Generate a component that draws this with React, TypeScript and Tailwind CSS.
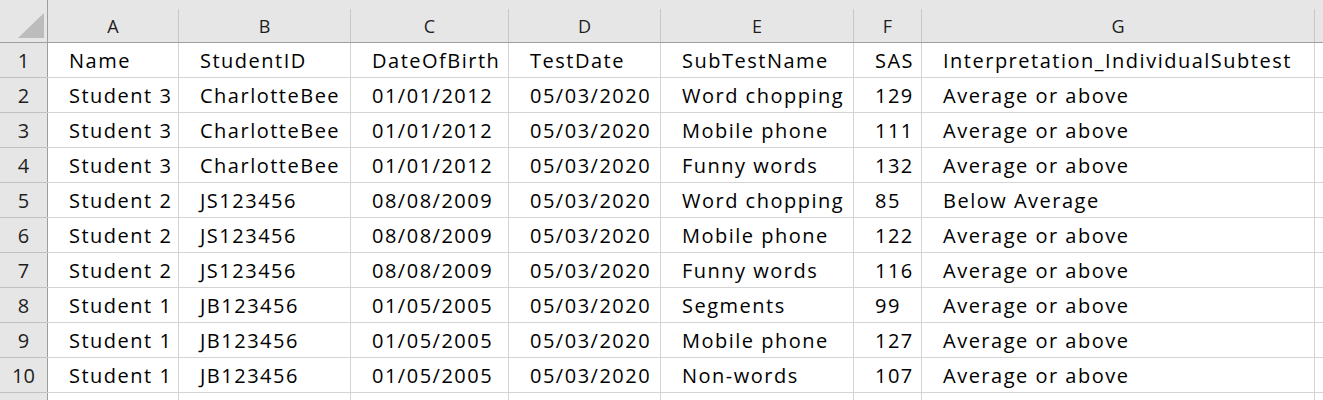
import React from "react";

const cols = [
  { key: "A", w: "w-[131px]" },
  { key: "B", w: "w-[172px]" },
  { key: "C", w: "w-[158px]" },
  { key: "D", w: "w-[152px]" },
  { key: "E", w: "w-[193px]" },
  { key: "F", w: "w-[68px]" },
  { key: "G", w: "w-[393px]" },
];

const rows: string[][] = [
  ["Name", "StudentID", "DateOfBirth", "TestDate", "SubTestName", "SAS", "Interpretation_IndividualSubtest"],
  ["Student 3", "CharlotteBee", "01/01/2012", "05/03/2020", "Word chopping", "129", "Average or above"],
  ["Student 3", "CharlotteBee", "01/01/2012", "05/03/2020", "Mobile phone", "111", "Average or above"],
  ["Student 3", "CharlotteBee", "01/01/2012", "05/03/2020", "Funny words", "132", "Average or above"],
  ["Student 2", "JS123456", "08/08/2009", "05/03/2020", "Word chopping", "85", "Below Average"],
  ["Student 2", "JS123456", "08/08/2009", "05/03/2020", "Mobile phone", "122", "Average or above"],
  ["Student 2", "JS123456", "08/08/2009", "05/03/2020", "Funny words", "116", "Average or above"],
  ["Student 1", "JB123456", "01/05/2005", "05/03/2020", "Segments", "99", "Average or above"],
  ["Student 1", "JB123456", "01/05/2005", "05/03/2020", "Mobile phone", "127", "Average or above"],
  ["Student 1", "JB123456", "01/05/2005", "05/03/2020", "Non-words", "107", "Average or above"],
];

export default function App() {
  return (
    <div
      className="w-[1323px] h-[400px] overflow-hidden bg-white text-black"
      style={{ fontFamily: "'Open Sans', 'Noto Sans', sans-serif" }}
    >
      {/* Column header row */}
      <div className="flex h-[43px] bg-[#e6e6e6] border-b border-[#9e9e9e]">
        <div className="relative w-[48px] shrink-0 border-r border-[#9e9e9e]">
          <svg className="absolute left-[18px] top-[13px]" width="26" height="25" viewBox="0 0 26 25">
            <polygon points="26,0 26,25 0,25" fill="#bcbcbc" />
          </svg>
        </div>
        {cols.map((c) => (
          <div key={c.key} className={`${c.w} shrink-0 flex flex-col`}>
            <div className="flex-1 flex items-center justify-center text-[18px] text-[#1e1e1e] pt-[2px] border-r border-[#c8c8c8] mt-[9px]">
              <span>{c.key}</span>
            </div>
          </div>
        ))}
        <div className="flex-1" />
      </div>
      {rows.map((r, i) => (
        <div key={i} className="flex h-[35px] border-b border-[#d4d4d4]">
          <div className="w-[48px] shrink-0 flex items-center justify-center pt-[2px] bg-[#e6e6e6] border-r border-[#9e9e9e] text-[20px] text-[#1e1e1e] relative">
            <span>{i + 1}</span>
            <div className="absolute left-0 right-0 -bottom-[1px] h-[1px] bg-[#c0c0c0]" />
          </div>
          {r.map((cell, j) => (
            <div
              key={j}
              className={`${cols[j].w} shrink-0 flex items-center pl-[21px] pt-[2px] border-r border-[#d4d4d4] text-[20px] tracking-[1.5px] whitespace-nowrap overflow-hidden`}
            >
              {cell}
            </div>
          ))}
          <div className="flex-1" />
        </div>
      ))}
      <div className="flex h-[20px]">
        <div className="w-[48px] shrink-0 bg-[#e6e6e6] border-r border-[#9e9e9e]" />
        {cols.map((c) => (
          <div key={c.key} className={`${c.w} shrink-0 border-r border-[#d4d4d4]`} />
        ))}
      </div>
    </div>
  );
}
